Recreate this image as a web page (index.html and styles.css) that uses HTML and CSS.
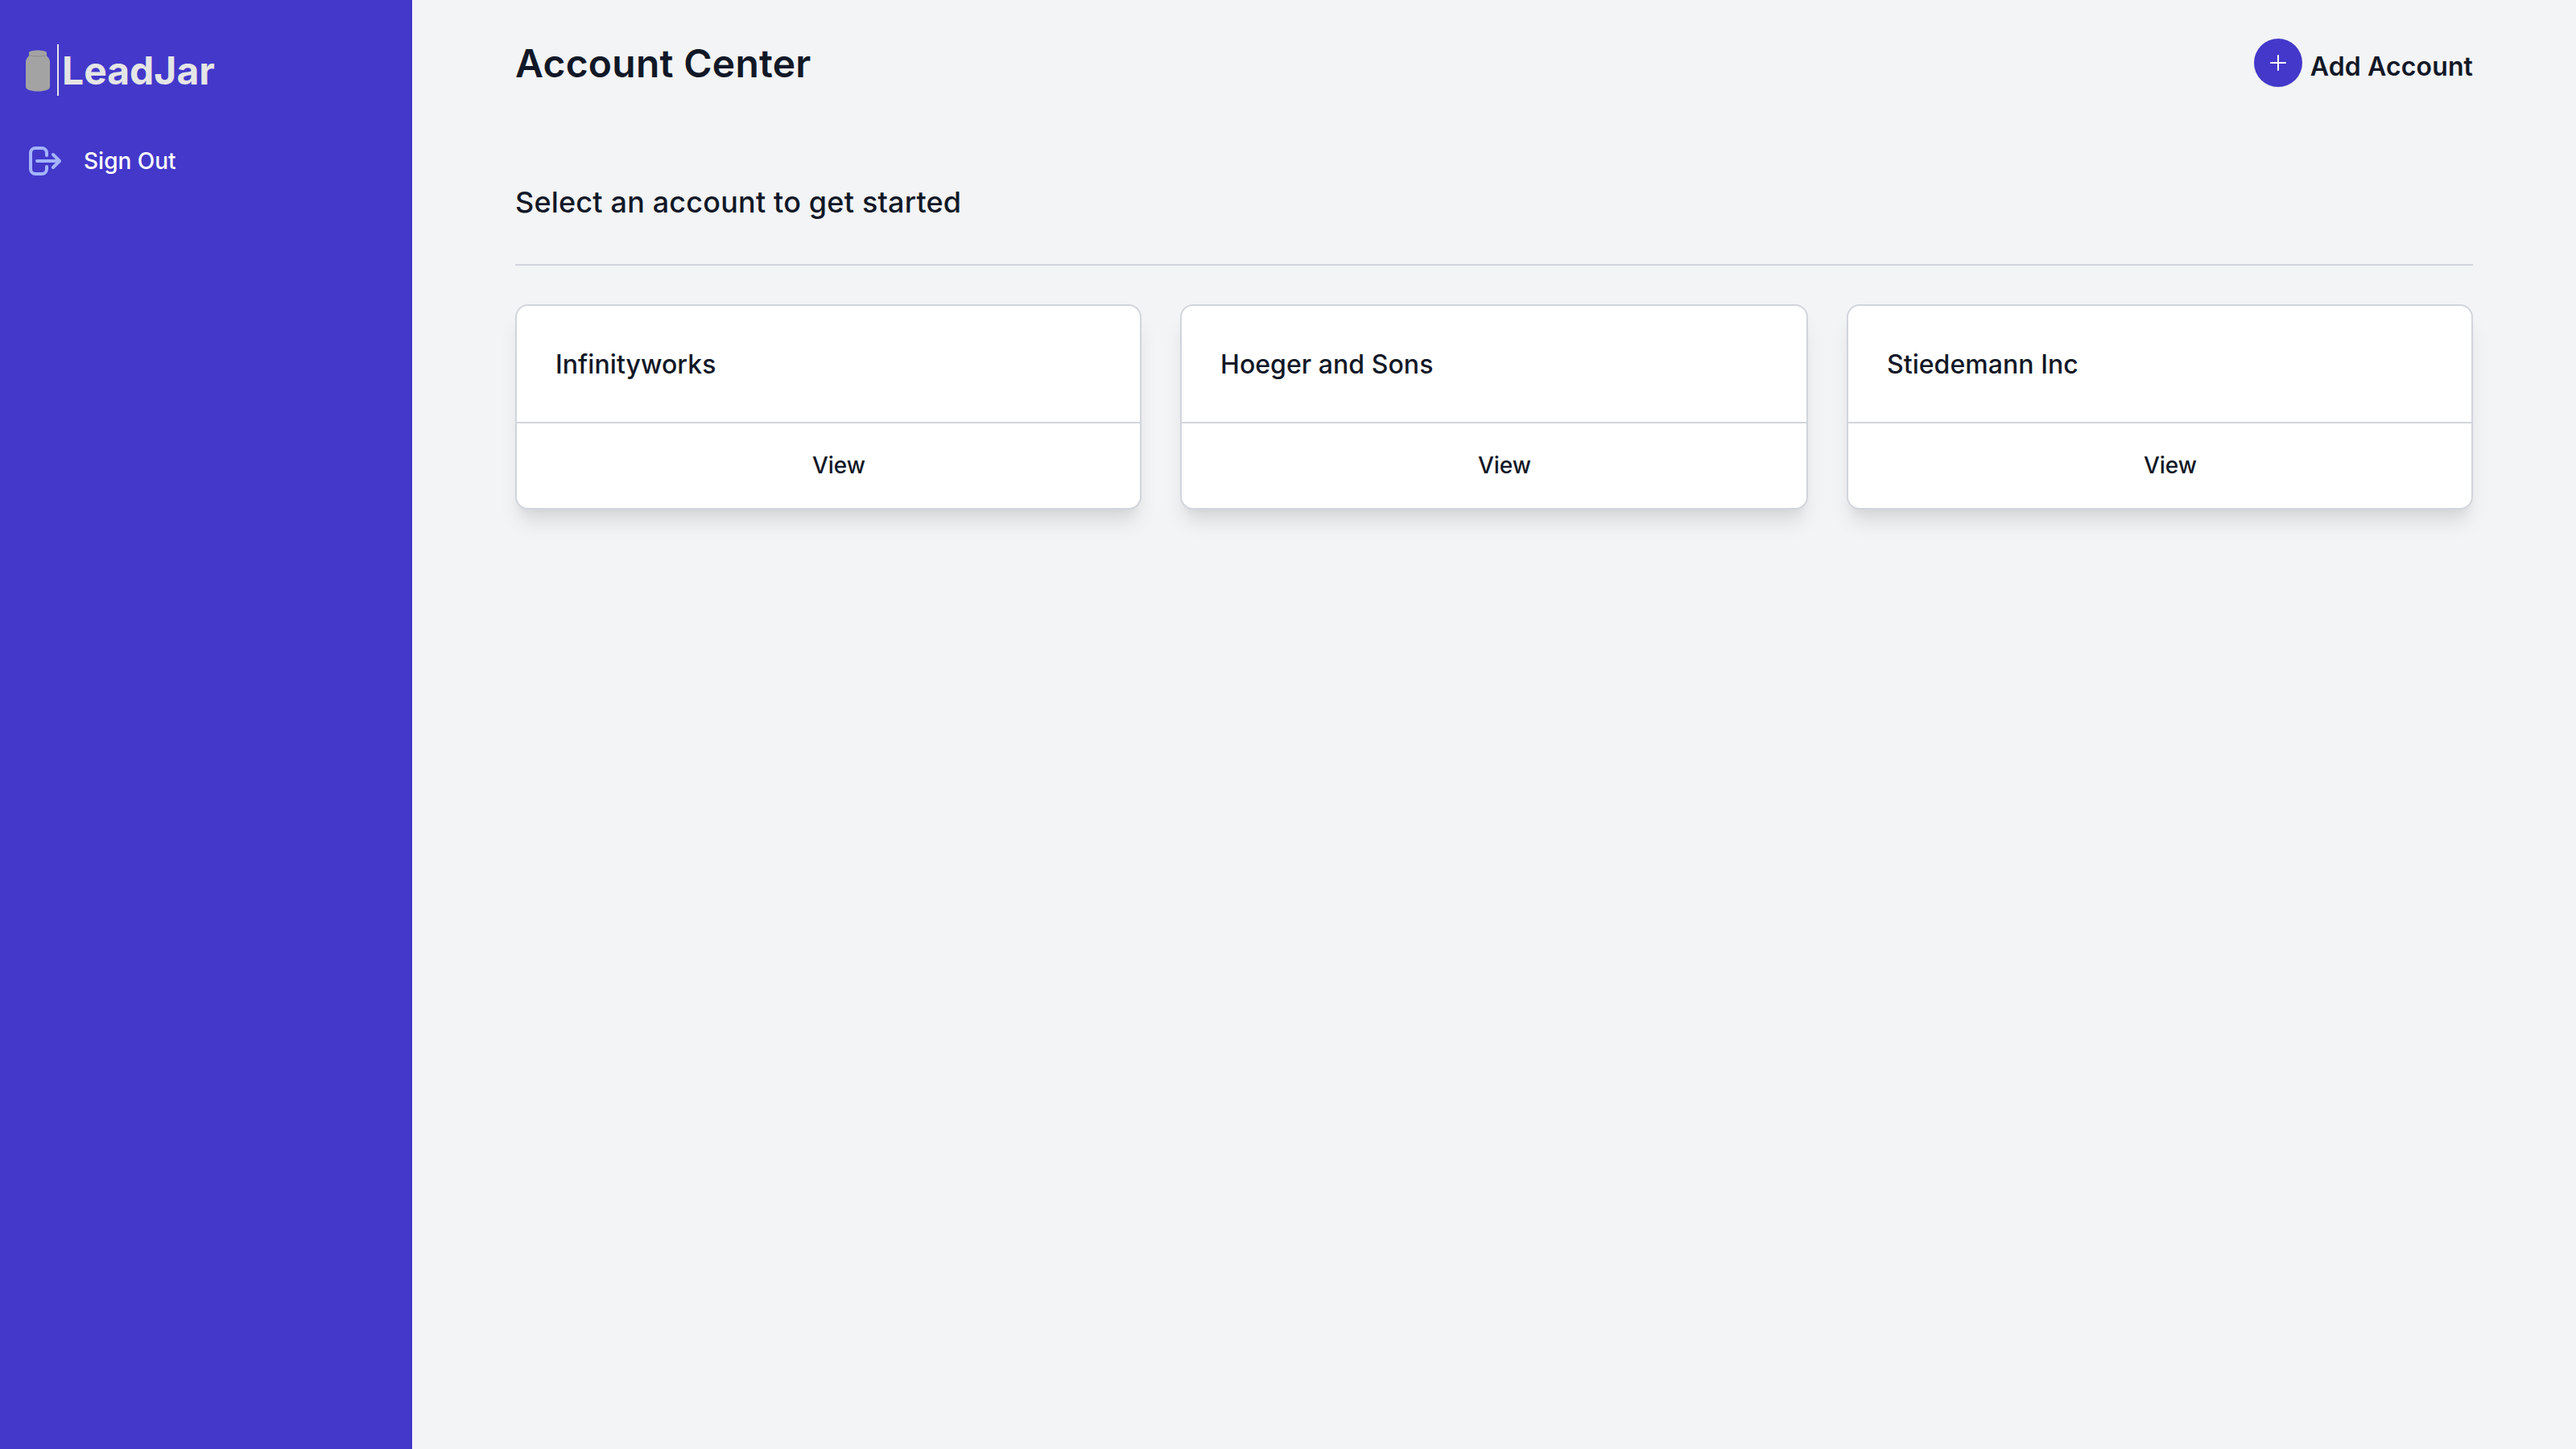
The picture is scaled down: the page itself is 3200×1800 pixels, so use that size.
FILE: index.html
```html
<!DOCTYPE html>
<html lang="en">
<head>
<meta charset="utf-8">
<title>LeadJar</title>
<link rel="stylesheet" href="styles.css">
</head>
<body>
<div class="app">
  <aside class="sidebar">
    <div class="brand">
      <svg class="jar" viewBox="0 0 32 52" width="32" height="52" aria-hidden="true">
        <path fill="#a3a3a3" d="M5 3.500C5 1.500 10 .5 16 .5s11 1 11 3v3c0 1 .6 1.500 1.500 2.500C30 10.500 31 12.500 31 15v31c0 3-6 5.500-15 5.500S1 49 1 46V15C1 12.500 2 10.500 3.500 9 4.400 8 5 7.500 5 6.500z"/>
        <path fill="none" stroke="#8c8c8c" stroke-width="1" d="M6 7c5 1.200 15 1.200 20 0"/>
      </svg>
      <span class="brand-rule"></span>
      <span class="brand-name">LeadJar</span>
    </div>
    <a class="nav-item" href="#">
      <svg class="nav-icon" viewBox="0 0 40 36" width="40" height="36" fill="none" stroke="#a5b4fc" stroke-width="4" stroke-linecap="round" stroke-linejoin="round" aria-hidden="true">
        <path d="M22 11V8a6 6 0 0 0-6-6H8a6 6 0 0 0-6 6v20a6 6 0 0 0 6 6h8a6 6 0 0 0 6-6v-3"/>
        <path d="M10 18h28M30 10l8 8-8 8"/>
      </svg>
      <span>Sign Out</span>
    </a>
  </aside>
  <main class="main">
    <header class="header">
      <h1 class="title">Account Center</h1>
      <a class="add" href="#">
        <span class="add-circle">
          <svg viewBox="0 0 20 20" width="20" height="20" fill="none" stroke="#fff" stroke-width="2" stroke-linecap="round" aria-hidden="true"><path d="M10 1v18M1 10h18"/></svg>
        </span>
        <span class="add-label">Add Account</span>
      </a>
    </header>
    <h2 class="subtitle">Select an account to get started</h2>
    <div class="cards">
      <article class="card"><div class="card-name">Infinityworks</div><a class="card-action" href="#">View</a></article>
      <article class="card"><div class="card-name">Hoeger and Sons</div><a class="card-action" href="#">View</a></article>
      <article class="card"><div class="card-name">Stiedemann Inc</div><a class="card-action" href="#">View</a></article>
    </div>
  </main>
</div>
</body>
</html>
```
FILE: styles.css
```css
* { box-sizing: border-box; }
html, body { margin: 0; height: 100%; }
body { font-family: Inter, "Liberation Sans", sans-serif; background: #f3f4f6; color: #111827; }
a { text-decoration: none; color: inherit; }
.app { display: flex; height: 1800px; }
.sidebar { width: 512px; flex: none; background: #4338ca; padding: 54px 31px 0; }
.brand { display: flex; align-items: center; height: 66px; }
.jar { flex: none; margin-top: 2px; }
.brand-rule { width: 2px; height: 64px; background: #e5e5e5; margin-left: 8px; }
.brand-name { font-size: 48px; font-weight: 700; color: #e5e5e5; margin: 2px 0 0 4px; line-height: 64px; }
.nav-item { display: flex; align-items: center; margin-top: 62px; padding-left: 5px; height: 36px; color: #fff; font-size: 28px; font-weight: 500; }
.nav-icon { flex: none; margin-right: 28px; }
.main { flex: 1; padding: 48px 128px 0; }
.header { display: flex; justify-content: space-between; align-items: flex-start; }
.title { margin: 0; font-size: 48px; font-weight: 600; line-height: 62px; letter-spacing: .25px; color: #111827; }
.add { display: flex; align-items: center; font-size: 32px; font-weight: 600; height: 60px; letter-spacing: .12px; }
.add-circle { width: 60px; height: 60px; border-radius: 50%; background: #4338ca; display: flex; align-items: center; justify-content: center; box-shadow: 0 1px 2px rgba(0,0,0,.05); }
.add-label { margin-left: 10px; margin-top: 8px; }
.subtitle { margin: 117px 0 0; padding-bottom: 53px; border-bottom: 2px solid #d1d5db; font-size: 36px; font-weight: 500; line-height: 48px; letter-spacing: .18px; }
.cards { display: grid; grid-template-columns: 778px 780px 778px; gap: 48px; margin-top: 48px; }
.card { background: #fff; border: 2px solid #d1d5db; border-radius: 16px; box-shadow: 0 20px 25px -5px rgba(0,0,0,.1), 0 10px 10px -5px rgba(0,0,0,.04); overflow: hidden; }
.card-name { padding: 2px 48px 0; font-size: 32px; font-weight: 450; line-height: 48px; letter-spacing: .05px; height: 146px; border-bottom: 2px solid #d1d5db; display: flex; align-items: center; }
.card-action { display: block; text-align: center; font-size: 28px; font-weight: 500; line-height: 104px; height: 105px; padding-left: 26px; }
```
